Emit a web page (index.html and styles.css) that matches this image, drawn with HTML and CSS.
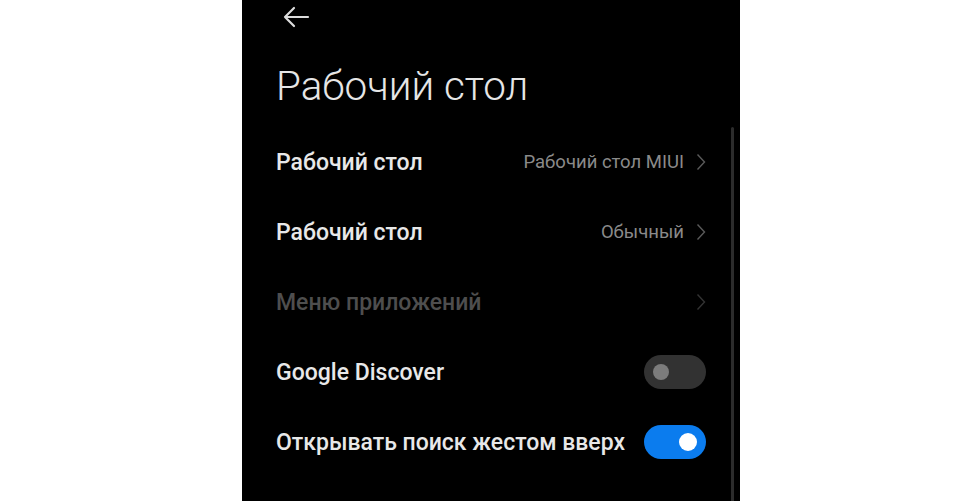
FILE: index.html
```html
<!DOCTYPE html>
<html lang="ru">
<head>
<meta charset="utf-8">
<link rel="stylesheet" href="styles.css">
</head>
<body>
<div class="phone">
  <div class="scrollbar"></div>
  <header class="top">
    <svg class="back" width="28" height="22" viewBox="0 0 28 22">
      <path d="M26 11H3M12 2L3 11L12 20" fill="none" stroke="#dcdcdc" stroke-width="2.2" stroke-linecap="round" stroke-linejoin="round"/>
    </svg>
    <h1 class="title">Рабочий стол</h1>
  </header>
  <ul class="list">
    <li class="row">
      <span class="label">Рабочий стол</span>
      <span class="value">Рабочий стол MIUI</span>
      <svg class="chev" width="10" height="18" viewBox="0 0 10 18"><path d="M1.5 1.5L8.5 9L1.5 16.5" fill="none" stroke="#5a5a5a" stroke-width="1.4"/></svg>
    </li>
    <li class="row">
      <span class="label">Рабочий стол</span>
      <span class="value">Обычный</span>
      <svg class="chev" width="10" height="18" viewBox="0 0 10 18"><path d="M1.5 1.5L8.5 9L1.5 16.5" fill="none" stroke="#5a5a5a" stroke-width="1.4"/></svg>
    </li>
    <li class="row disabled">
      <span class="label">Меню приложений</span>
      <span class="value"></span>
      <svg class="chev" width="10" height="18" viewBox="0 0 10 18"><path d="M1.5 1.5L8.5 9L1.5 16.5" fill="none" stroke="#333" stroke-width="1.4"/></svg>
    </li>
    <li class="row">
      <span class="label">Google Discover</span>
      <span class="switch off"><span class="knob"></span></span>
    </li>
    <li class="row">
      <span class="label">Открывать поиск жестом вверх</span>
      <span class="switch on"><span class="knob"></span></span>
    </li>
  </ul>
</div>
</body>
</html>
```
FILE: styles.css
```css
html, body {
  margin: 0;
  padding: 0;
  background: #fff;
}
body {
  width: 967px;
  height: 501px;
  overflow: hidden;
  font-family: Roboto, "Noto Sans", sans-serif;
}
.phone {
  position: relative;
  margin-left: 242px;
  width: 498px;
  height: 501px;
  background: #000;
  box-sizing: border-box;
  padding: 0 34px;
}
.scrollbar {
  position: absolute;
  left: 489px;
  top: 127px;
  width: 3px;
  height: 374px;
  background: #2c2c2c;
  border-radius: 2px 2px 0 0;
}
.top {
  height: 127px;
  display: flex;
  flex-direction: column;
}
.back {
  display: block;
  margin-top: 6px;
  margin-left: 6px;
}
.title {
  margin: 37px 0 0 0;
  font-weight: 300;
  font-size: 40.4px;
  line-height: 44px;
  color: #e6e6e6;
  letter-spacing: 0;
}
.list {
  list-style: none;
  margin: 0;
  padding: 0;
}
.row {
  height: 70px;
  display: flex;
  align-items: center;
}
.label {
  flex: 1;
  font-weight: 500;
  font-size: 23px;
  color: #e8e8e8;
}
.disabled .label {
  color: #4e4e4e;
}
.value {
  font-size: 18.5px;
  color: #8a8a8a;
  margin-right: 12px;
}
.chev {
  display: block;
}
.switch {
  position: relative;
  width: 62px;
  height: 34px;
  border-radius: 17px;
  display: flex;
  align-items: center;
  box-sizing: border-box;
}
.switch.off {
  background: #323232;
  padding-left: 9px;
}
.switch.off .knob {
  width: 16px;
  height: 16px;
  border-radius: 50%;
  background: #7c7c7c;
}
.switch.on {
  background: #0b7cee;
  justify-content: flex-end;
  padding-right: 9px;
}
.switch.on .knob {
  width: 18px;
  height: 18px;
  border-radius: 50%;
  background: #fff;
}
```
